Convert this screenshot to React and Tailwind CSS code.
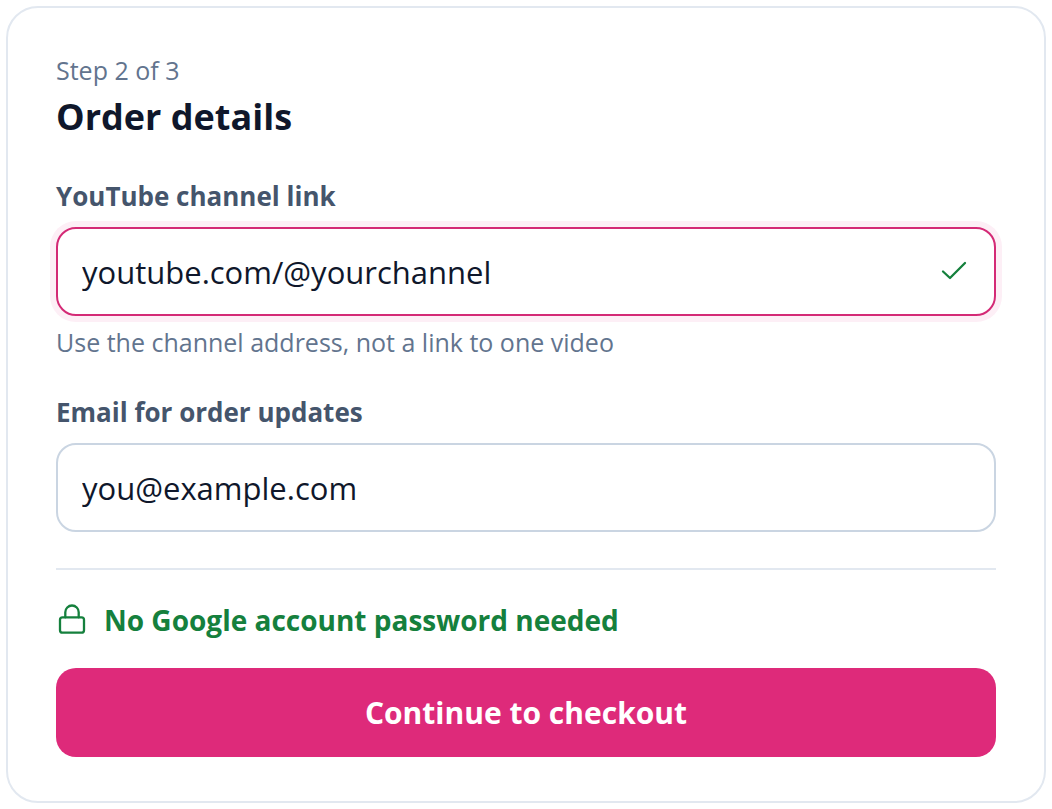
import React, { useState } from 'react';

const CheckIcon = () => (
  <svg
    viewBox="0 0 32 32"
    className="pointer-events-none absolute inset-y-0 right-[26px] my-auto size-8"
    fill="none"
    stroke="currentColor"
    strokeWidth="2.3"
    strokeLinecap="round"
    strokeLinejoin="round"
    aria-hidden="true"
  >
    <path d="M5 15.5 12 22 27 7" />
  </svg>
);

const LockIcon = () => (
  <svg
    viewBox="0 0 32 32"
    className="size-8 shrink-0"
    fill="none"
    stroke="currentColor"
    strokeWidth="2.3"
    strokeLinecap="round"
    strokeLinejoin="round"
    aria-hidden="true"
  >
    <rect x="4" y="13.3" width="24" height="15.4" rx="2.5" />
    <path d="M9.3 13.3V8.2a6.7 6.7 0 0 1 13.4 0v5.1" />
  </svg>
);

const App = () => {
  const [channel, setChannel] = useState('youtube.com/@yourchannel');
  const [email, setEmail] = useState('you@example.com');

  return (
    <main className="p-[6px] bg-white font-['Open_Sans',sans-serif] text-slate-900">
      <form
        className="rounded-[32px] border-2 border-slate-200 px-12 py-11"
        onSubmit={(e) => e.preventDefault()}
      >
        {/* Heading */}
        <p className="text-[25px] leading-9 text-slate-500">Step 2 of 3</p>
        <h1 className="mt-1 text-[36px] leading-[50px] font-bold">Order details</h1>

        {/* Channel */}
        <div className="mt-9">
          <label htmlFor="channel" className="block text-[26px] leading-9 font-bold text-slate-600">
            YouTube channel link
          </label>
          <div className="relative mt-[13px] text-[#15803d]">
            <input
              id="channel"
              type="text"
              value={channel}
              onChange={(e) => setChannel(e.target.value)}
              aria-describedby="channel-hint"
              className="block h-[89px] w-full rounded-[20px] border-2 border-[#d42a76] bg-white pl-6 pr-16 text-[31px] text-slate-900 outline-none ring-6 ring-[#fdeff6]"
            />
            <CheckIcon />
          </div>
          <p id="channel-hint" className="mt-2 text-[25px] leading-9 text-slate-500">
            Use the channel address, not a link to one video
          </p>
        </div>

        {/* Email */}
        <div className="mt-[34px]">
          <label htmlFor="email" className="block text-[26px] leading-9 font-bold text-slate-600">
            Email for order updates
          </label>
          <input
            id="email"
            type="email"
            value={email}
            onChange={(e) => setEmail(e.target.value)}
            className="mt-[13px] block h-[89px] w-full rounded-[20px] border-2 border-slate-300 bg-white px-6 text-[31px] outline-none"
          />
        </div>

        {/* Checkout */}
        <div className="mt-9 border-t-2 border-slate-200 pt-8">
          <p className="flex items-center gap-4 text-[28px] leading-9 font-bold text-[#15803d]">
            <LockIcon />
            No Google account password needed
          </p>
          <button
            type="submit"
            className="mt-[30px] h-[89px] w-full cursor-pointer rounded-[20px] bg-[#de2a7a] text-[30px] font-bold text-white"
          >
            Continue to checkout
          </button>
        </div>
      </form>
    </main>
  );
};

export default App;
